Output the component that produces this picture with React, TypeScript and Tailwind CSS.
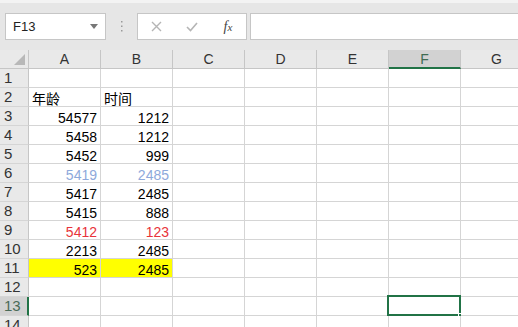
import React from "react";

const cols = ["A", "B", "C", "D", "E", "F", "G"];

type Cell = { v: string; align?: "l" | "r"; color?: string; bg?: string };

const data: Record<number, Cell[]> = {
  2: [{ v: "年龄", align: "l" }, { v: "时间", align: "l" }],
  3: [{ v: "54577" }, { v: "1212" }],
  4: [{ v: "5458" }, { v: "1212" }],
  5: [{ v: "5452" }, { v: "999" }],
  6: [{ v: "5419", color: "text-[#8ea9db]" }, { v: "2485", color: "text-[#8ea9db]" }],
  7: [{ v: "5417" }, { v: "2485" }],
  8: [{ v: "5415" }, { v: "888" }],
  9: [{ v: "5412", color: "text-[#e8333a]" }, { v: "123", color: "text-[#e8333a]" }],
  10: [{ v: "2213" }, { v: "2485" }],
  11: [{ v: "523", bg: "bg-[#ffff00]" }, { v: "2485", bg: "bg-[#ffff00]" }],
};

const font = { fontFamily: '"Liberation Sans", "Noto Sans CJK SC", sans-serif' };

function DataRow({ n }: { n: number }) {
  const cells = data[n] || [];
  const selRow = n === 13;
  return (
    <div className="flex h-[19px] shrink-0">
      <div
        className={
          "w-[29px] shrink-0 h-[19px] border-b border-[#d5d5d5] flex items-center pl-[4px] pt-[1px] text-[15px] " +
          (selRow
            ? "bg-[#d2d2d2] text-[#4a6a58] border-r-2 border-r-[#217346]"
            : "bg-[#e9e9e9] text-[#333] border-r border-r-[#c6c6c6]")
        }
      >
        {n}
      </div>
      {cols.map((c, i) => {
        const cell = cells[i];
        const isSel = selRow && c === "F";
        return (
          <div
            key={c}
            className={
              "relative w-[72px] shrink-0 h-[19px] border-r border-b border-[#d5d5d5] flex items-center px-[3px] pt-[4px] text-[14px] " +
              (cell?.align === "l" ? "justify-start " : "justify-end ") +
              (cell?.color ?? "text-black") +
              " " +
              (cell?.bg ?? "bg-white")
            }
          >
            {cell?.v}
            {isSel && (
              <>
                <div className="absolute left-[-2px] top-[-2px] w-[74px] h-[21px] border-2 border-[#217346]" />
                <div className="absolute right-[-4px] bottom-[-4px] w-[6px] h-[6px] bg-[#217346] border border-white" />
              </>
            )}
          </div>
        );
      })}
    </div>
  );
}

export default function App() {
  return (
    <div className="w-[518px] h-[327px] overflow-hidden bg-white flex flex-col" style={font}>
      {/* formula bar area */}
      <div className="h-[50px] shrink-0 bg-[#e6e6e6] border-t-[3px] border-t-[#f3f3f3] flex items-start pt-[10px] pl-[5px]">
        <div className="w-[101px] h-[27px] bg-white border border-[#c6c6c6] flex items-center justify-between pl-[7px] pr-[7px] text-[13px] text-[#222]">
          <span>F13</span>
          <svg width="8" height="5" viewBox="0 0 8 5">
            <path d="M0 0 L8 0 L4 5 Z" fill="#777" />
          </svg>
        </div>
        <div className="w-[31px] h-[27px] flex items-center justify-center">
          <svg width="3" height="11" viewBox="0 0 3 11">
            <rect x="1" y="0" width="1.5" height="1.5" fill="#9a9a9a" />
            <rect x="1" y="4.5" width="1.5" height="1.5" fill="#9a9a9a" />
            <rect x="1" y="9" width="1.5" height="1.5" fill="#9a9a9a" />
          </svg>
        </div>
        <div className="w-[110px] h-[27px] bg-white border border-[#c6c6c6] flex items-center">
          <div className="w-[36px] flex justify-center">
            <svg width="11" height="11" viewBox="0 0 11 11">
              <path d="M1 1 L10 10 M10 1 L1 10" stroke="#b5b5b5" strokeWidth="1.4" />
            </svg>
          </div>
          <div className="w-[36px] flex justify-center">
            <svg width="12" height="10" viewBox="0 0 12 10">
              <path d="M1 5 L4.5 8.5 L11 1" stroke="#b5b5b5" strokeWidth="1.6" fill="none" />
            </svg>
          </div>
          <div
            className="w-[36px] flex justify-center text-[14px] italic text-[#444]"
            style={{ fontFamily: '"Liberation Serif", serif' }}
          >
            <span>
              f<span className="text-[11px]">x</span>
            </span>
          </div>
        </div>
        <div className="ml-[3px] flex-1 h-[27px] bg-white border border-[#c6c6c6] border-r-0" />
      </div>
      {/* column header */}
      <div className="flex h-[19px] shrink-0">
        <div className="w-[29px] shrink-0 h-[19px] bg-[#e9e9e9] border-r border-b border-[#c6c6c6] relative">
          <svg className="absolute right-[3px] bottom-[3px]" width="11" height="11" viewBox="0 0 11 11">
            <path d="M11 0 L11 11 L0 11 Z" fill="#b8b8b8" />
          </svg>
        </div>
        {cols.map((c) => (
          <div
            key={c}
            className={
              "w-[72px] shrink-0 h-[19px] flex items-center justify-center pt-[1px] text-[14px] border-r border-[#c6c6c6] " +
              (c === "F"
                ? "bg-[#d2d2d2] text-[#3f6b52] border-b-2 border-b-[#217346]"
                : "bg-[#e9e9e9] text-[#333] border-b border-b-[#c6c6c6]")
            }
          >
            {c}
          </div>
        ))}
      </div>
      {Array.from({ length: 14 }, (_, i) => (
        <DataRow key={i} n={i + 1} />
      ))}
    </div>
  );
}
